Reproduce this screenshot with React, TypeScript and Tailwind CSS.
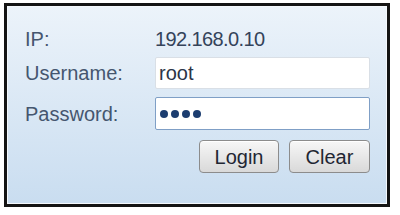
export default function App() {
  return (
    <div className="w-[400px] h-[215px] bg-white pt-[3px] pl-[4px] font-['Liberation_Sans',Arial,sans-serif]">
      <div className="w-[386px] h-[204px] border-[3px] border-[#141414] bg-gradient-to-b from-[#ecf3fa] to-[#c9ddf0]">
        <div className="h-full border border-[#f4f8fc] pl-[17px] pr-[16px] pt-[16px] text-[20px] text-[#45566f]">
          {/* IP */}
          <div className="flex items-center h-[32px]">
            <span className="w-[130px]">IP:</span>
            <span className="text-[#34435a] tracking-[-0.6px]">192.168.0.10</span>
          </div>

          {/* Username */}
          <div className="flex items-center h-[32px] mt-[2px]">
            <span className="w-[130px]">Username:</span>
            <div className="flex-1 h-full flex items-center px-[3px] bg-white border border-[#d9dfe6] rounded-[2px] text-[#2b3547]">
              root
            </div>
          </div>

          {/* Password */}
          <div className="flex items-center h-[33px] mt-[8px]">
            <span className="w-[130px]">Password:</span>
            <div className="flex-1 h-full flex items-center gap-[3px] px-[4px] bg-white border border-[#7f9fc6] rounded-[2px]">
              <span className="w-[8px] h-[8px] rounded-full bg-[#1c3d70]" />
              <span className="w-[8px] h-[8px] rounded-full bg-[#1c3d70]" />
              <span className="w-[8px] h-[8px] rounded-full bg-[#1c3d70]" />
              <span className="w-[8px] h-[8px] rounded-full bg-[#1c3d70]" />
            </div>
          </div>

          {/* Buttons */}
          <div className="flex justify-end gap-[10px] mt-[10px]">
            <button className="w-[80px] h-[33px] rounded-[4px] border border-[#8c8c8c] bg-gradient-to-b from-[#f7f7f7] to-[#d9d9d9] text-[#1f2633] shadow-[inset_0_1px_0_#fff]">
              Login
            </button>
            <button className="w-[81px] h-[33px] rounded-[4px] border border-[#8c8c8c] bg-gradient-to-b from-[#f7f7f7] to-[#d9d9d9] text-[#1f2633] shadow-[inset_0_1px_0_#fff]">
              Clear
            </button>
          </div>
        </div>
      </div>
    </div>
  );
}
